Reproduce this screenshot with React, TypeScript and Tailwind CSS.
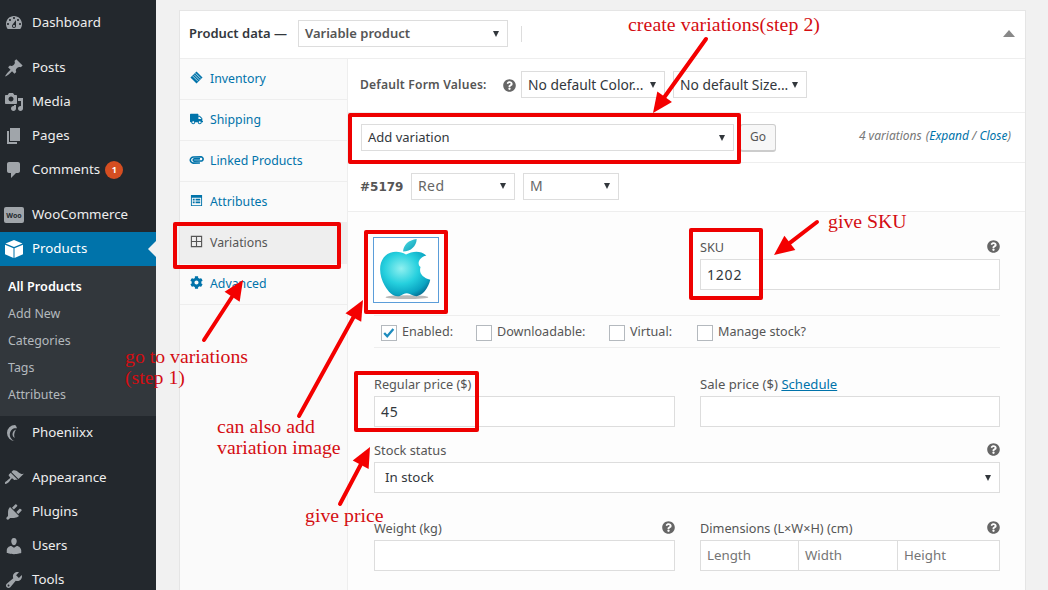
import React from "react";
import { FaTruck, FaPaperclip, FaCog, FaQuestionCircle } from "react-icons/fa";

const font = "font-['Noto_Sans',sans-serif]";
const P: Record<string, string> = {
  dash: "M3.76 16h12.48c1.1-1.37 1.76-3.11 1.76-5 0-4.42-3.58-8-8-8s-8 3.58-8 8c0 1.89.66 3.63 1.76 5zM10 4c.55 0 1 .45 1 1s-.45 1-1 1-1-.45-1-1 .45-1 1-1zM6 6c.55 0 1 .45 1 1s-.45 1-1 1-1-.45-1-1 .45-1 1-1zm8 0c.55 0 1 .45 1 1s-.45 1-1 1-1-.45-1-1 .45-1 1-1zm-5.37 5.55L12 7v6c0 1.1-.9 2-2 2s-2-.9-2-2c0-.57.24-1.08.63-1.45zM4 10c.55 0 1 .45 1 1s-.45 1-1 1-1-.45-1-1 .45-1 1-1zm12 0c.55 0 1 .45 1 1s-.45 1-1 1-1-.45-1-1 .45-1 1-1zm-5 3c0-.55-.45-1-1-1s-1 .45-1 1 .45 1 1 1 1-.45 1-1z",
  post: "M10.44 3.02l1.82-1.82 6.36 6.35-1.83 1.82c-1.05-.68-2.48-.57-3.41.36l-.75.75c-.92.93-1.04 2.35-.35 3.41l-1.83 1.82-2.41-2.41-2.8 2.79c-.42.42-3.38 2.71-3.8 2.29s1.86-3.39 2.28-3.81l2.79-2.79L4.1 9.36l1.83-1.82c1.05.69 2.48.57 3.4-.36l.75-.75c.93-.92 1.05-2.35.36-3.41z",
  media: "M13 11V4c0-.55-.45-1-1-1h-1.67L9 1H5L3.67 3H2c-.55 0-1 .45-1 1v7c0 .55.45 1 1 1h10c.55 0 1-.45 1-1zM7 4.5c1.38 0 2.5 1.12 2.5 2.5S8.38 9.5 7 9.5 4.5 8.38 4.5 7 5.62 4.5 7 4.5zM14 6h5v10.5c0 1.38-1.12 2.5-2.5 2.5S14 17.88 14 16.5s1.12-2.5 2.5-2.5c.17 0 .34.02.5.05V9h-3V6zm-4 8.05V13h2v3.5c0 1.38-1.12 2.5-2.5 2.5S7 17.88 7 16.5 8.12 14 9.5 14c.17 0 .34.02.5.05z",
  page: "M6 15V2h10v13H6zm-1 1h8v2H3V5h2v11z",
  comment: "M5 2h9c1.1 0 2 .9 2 2v7c0 1.1-.9 2-2 2h-2l-5 5v-5H5c-1.1 0-2-.9-2-2V4c0-1.1.9-2 2-2z",
  box: "M10 1l8.5 3.5L10 8 1.5 4.500zM1 5.700l8.500 3.500V19L1 15.300zM19 5.700V15.300L10.500 19V9.200z",
  phoenix: "M11 2a8 8 0 1 0 0 16c-1.500-.3-3-1.100-3.800-2.500C4.500 12 6 7 9.500 5.500c1-.4 2.200-.5 3.500-.2-.5-1.500-1-2.700-2-3.300zm1 4.500c-2.500.8-4 3.500-3.200 6.200.3 1 1 1.800 2 2.100-1-1.800-1-5 1.200-8.300z",
  appearance: "M14.48 11.06L7.41 3.99l1.5-1.5c.5-.56 2.3-.47 3.51.32 1.21.8 1.43 1.28 2.91 2.1 1.18.64 2.45 1.26 4.45.85zm-.71.71L6.7 4.7 4.93 6.47c-.39.39-.39 1.02 0 1.41l1.06 1.06c.39.39.39 1.03 0 1.42-.6.6-1.43 1.11-2.21 1.69-.35.26-.7.53-1.01.84C1.43 13.23.4 14.95 1.1 15.65c.7.7 2.42-.33 3.76-1.67.31-.31.58-.66.85-1.01.57-.78 1.08-1.61 1.69-2.21.39-.39 1.02-.39 1.41 0l1.06 1.06c.39.39 1.02.39 1.41 0z",
  plugin: "M13.11 4.36L9.87 7.6 8 5.73l3.24-3.24c.35-.34 1.05-.2 1.56.32.52.51.66 1.21.31 1.55zm-8 1.77l.91-1.12 9.01 9.01-1.19.84c-.71.71-2.63 1.16-3.82 1.16H6.14L4.9 17.26c-.59.59-1.54.59-2.12 0-.59-.58-.59-1.53 0-2.12l1.24-1.24v-3.88c0-1.13.4-3.19 1.09-3.89zm7.26 3.97l3.24-3.24c.34-.35 1.04-.21 1.55.31.52.51.66 1.21.31 1.55l-3.24 3.25z",
  users: "M10 9.25c-2.27 0-2.73-3.44-2.73-3.44C7 4.02 7.82 2 9.97 2c2.16 0 2.98 2.02 2.71 3.81 0 0-.41 3.44-2.68 3.44zm0 2.57L12.72 10c2.39 0 4.52 2.33 4.52 4.53v2.49s-3.65 1.13-7.24 1.13c-3.65 0-7.24-1.13-7.24-1.13v-2.49c0-2.25 1.94-4.48 4.47-4.48z",
  tools: "M16.68 9.77c-1.34 1.34-3.3 1.67-4.95.99l-5.41 6.52c-.99.99-2.59.99-3.58 0s-.99-2.59 0-3.57l6.52-5.42c-.68-1.65-.35-3.61.99-4.95 1.28-1.28 3.12-1.62 4.72-1.06l-2.89 2.89 2.82 2.82 2.86-2.87c.53 1.58.18 3.39-1.08 4.65zM3.81 16.21c.4.39 1.04.39 1.43 0 .4-.4.4-1.04 0-1.43-.39-.4-1.03-.4-1.43 0-.39.39-.39 1.03 0 1.43z",
};

function Dash({ d, className = "" }: { d: string; className?: string }) {
  return (
    <svg viewBox="0 0 20 20" className={`w-5 h-5 fill-current ${className}`}>
      <path d={d} />
    </svg>
  );
}

function Item({ icon, label, active, badge }: { icon?: string; label: string; active?: boolean; badge?: string }) {
  return (
    <div className={`relative flex items-center h-[34px] pl-[4px] ${active ? "bg-[#0073aa] text-white" : "text-[#eeeeee]"}`}>
      <div className={`w-[20px] flex justify-center mr-[8px] ${active ? "text-white" : "text-[#a0a5aa]"}`}>
        {icon === "woo" ? (
          <div className="w-5 h-[16px] rounded-[2px] bg-[#a0a5aa] text-[#23282d] text-[7px] font-bold flex items-center justify-center leading-none">Woo</div>
        ) : (
          <Dash d={P[icon!]} />
        )}
      </div>
      <span className="text-[13.3px] leading-none -mt-[1px]">{label}</span>
      {badge && (
        <span className="ml-[5px] w-[18px] h-[18px] rounded-full bg-[#d54e21] text-white text-[9px] font-bold flex items-center justify-center">{badge}</span>
      )}
      {active && <span className="absolute right-0 top-[9px] border-y-[8px] border-y-transparent border-r-[8px] border-r-[#f1f1f1]" />}
    </div>
  );
}

function Sub({ label, bold }: { label: string; bold?: boolean }) {
  return (
    <div className={`flex items-center pl-[8px] ${bold ? "h-[29px] text-white font-semibold text-[12.700px]" : "h-[27px] text-[#b4b9be] text-[12.400px]"}`}>{label}</div>
  );
}

function Sidebar() {
  return (
    <aside className="w-[156px] shrink-0 bg-[#23282d] pt-[6px] h-[590px] overflow-hidden">
      <Item icon="dash" label="Dashboard" />
      <div className="h-[11px]" />
      <Item icon="post" label="Posts" />
      <Item icon="media" label="Media" />
      <Item icon="page" label="Pages" />
      <Item icon="comment" label="Comments" badge="1" />
      <div className="h-[11px]" />
      <Item icon="woo" label="WooCommerce" />
      <Item icon="box" label="Products" active />
      <div className="bg-[#32373c] h-[150px] pt-[6px]">
        <Sub label="All Products" bold />
        <Sub label="Add New" />
        <Sub label="Categories" />
        <Sub label="Tags" />
        <Sub label="Attributes" />
      </div>
      <Item icon="phoenix" label="Phoeniixx" />
      <div className="h-[11px]" />
      <Item icon="appearance" label="Appearance" />
      <Item icon="plugin" label="Plugins" />
      <Item icon="users" label="Users" />
      <Item icon="tools" label="Tools" />
    </aside>
  );
}

function Select({ label, className = "", h = "h-[27px]", px = "pl-[6px]" }: { label: string; className?: string; h?: string; px?: string }) {
  return (
    <div className={`flex items-center justify-between bg-white border border-[#dddddd] ${h} ${px} pr-[8px] text-[14px] text-[#32373c] ${className}`}>
      <span className="whitespace-nowrap leading-none">{label}</span>
      <span className="border-x-[3.5px] border-x-transparent border-t-[6px] border-t-[#32373c]" />
    </div>
  );
}

function Help({ className = "" }: { className?: string }) {
  return <FaQuestionCircle className={`w-[13px] h-[13px] text-[#666666] ${className}`} />;
}

function Tab({ icon, label, active }: { icon: React.ReactNode; label: string; active?: boolean }) {
  return (
    <div className={`h-[41px] flex items-center pl-[10px] border-b border-[#eeeeee] text-[12.300px] ${active ? "bg-[#eeeeee] text-[#555555]" : "text-[#0073aa]"}`}>
      <span className="w-[13px] h-[14px] mr-[7px] flex items-center justify-center -mt-[3px]">{icon}</span>
      <span className="leading-none">{label}</span>
    </div>
  );
}

function Field({ label, value, right, className = "" }: { label: React.ReactNode; value?: string; right?: boolean; className?: string }) {
  return (
    <div className={className}>
      <div className="flex justify-between items-center h-[13px] text-[12.700px] text-[#555555] leading-none">
        <span>{label}</span>
        {right && <Help className="-mt-[2px]" />}
      </div>
      <div className="mt-[5px] h-[31px] border border-[#dddddd] bg-white flex items-center pl-[6px] text-[14px] text-[#32373c] tracking-[0.8px]">{value}</div>
    </div>
  );
}

function Check({ label, checked, className = "" }: { label: string; checked?: boolean; className?: string }) {
  return (
    <div className={`flex items-center text-[12.600px] text-[#555555] ${className}`}>
      <span className="w-[16px] h-[16px] border border-[#b4b9be] bg-white mr-[5px] flex items-center justify-center">
        {checked && (
          <svg viewBox="0 0 16 16" className="w-[14px] h-[14px]">
            <path d="M2.500 8l3.500 3.800L13 3.500" fill="none" stroke="#1e8cbe" strokeWidth="2.600" />
          </svg>
        )}
      </span>
      <span className="leading-none">{label}</span>
    </div>
  );
}

function AppleImg() {
  return (
    <svg viewBox="0 0 66 66" className="w-full h-full">
      <defs>
        <radialGradient id="ag" cx="0.42" cy="0.38" r="0.68">
          <stop offset="0" stopColor="#8ff0f0" />
          <stop offset="0.5" stopColor="#26d0de" />
          <stop offset="0.85" stopColor="#0aa4c2" />
          <stop offset="1" stopColor="#06779b" />
        </radialGradient>
        <linearGradient id="lg" x1="0" y1="0" x2="1" y2="1">
          <stop offset="0" stopColor="#4fe2e6" />
          <stop offset="1" stopColor="#0a97b5" />
        </linearGradient>
      </defs>
      <ellipse cx="34" cy="61" rx="22" ry="2" fill="#8a8a8a" opacity="0.6" />
      <path d="M33 17 C26 13 16 13 10 20 C4 28 6 40 11 49 C15 56 20 61 26 60 C29 59 31 57 34 57 C37 57 40 60 44 60 C50 59 56 52 58 43 C50 41 46 36 48 30 C44 27 46 20 54 18 C47 12 39 14 33 17Z" fill="url(#ag)" />
      <path d="M30 14 C30 7 36 2 44 1 C44 8 38 14 30 14Z" fill="url(#lg)" />
    </svg>
  );
}

function Arrow({ x1, y1, x2, y2, w = 4, hl = 20, hw = 9 }: { x1: number; y1: number; x2: number; y2: number; w?: number; hl?: number; hw?: number }) {
  const dx = x2 - x1, dy = y2 - y1, l = Math.hypot(dx, dy);
  const ux = dx / l, uy = dy / l;
  const bx = x2 - ux * hl, by = y2 - uy * hl;
  const pts = `${x2},${y2} ${bx - uy * hw},${by + ux * hw} ${bx + uy * hw},${by - ux * hw}`;
  return (
    <g>
      <line x1={x1} y1={y1} x2={bx} y2={by} stroke="#f40000" strokeWidth={w} strokeLinecap="round" />
      <polygon points={pts} fill="#f40000" />
    </g>
  );
}

function Box({ className }: { className: string }) {
  return <div className={`absolute border-[4px] border-[#ee0000] rounded-[2px] ${className}`} />;
}

function Note({ className, children }: { className: string; children: React.ReactNode }) {
  return <div className={`absolute font-['Liberation_Serif',serif] text-[#d40d12] text-[19.800px] leading-[21px] whitespace-nowrap ${className}`}>{children}</div>;
}

export default function App() {
  return (
    <div className={`relative w-[1048px] h-[590px] overflow-hidden flex bg-[#f1f1f1] ${font}`}>
      <Sidebar />
      <main className="flex-1 pl-[23px] pr-[22px] pt-[10px] min-w-0">
        <div className="bg-white border border-[#e5e5e5] h-[600px]">
          <div className="h-[48px] border-b border-[#eeeeee] flex items-center pl-[9px] pr-[10px] pb-[2px]">
            <span className="text-[13px] font-semibold text-[#32373c] whitespace-nowrap w-[109px]">Product data —</span>
            <Select label="Variable product" className="w-[210px] !text-[13px] font-semibold !text-[#555555]" />
            <span className="ml-[13px] w-px h-[16px] bg-[#dddddd]" />
            <span className="ml-auto border-x-[6px] border-x-transparent border-b-[7px] border-b-[#888888]" />
          </div>
          <div className="flex">
            <div className="w-[168px] shrink-0 bg-[#fafafa] border-r border-[#eeeeee] h-[540px]">
              <div className="h-[246px] border-b border-[#eeeeee]">
                <Tab
                  icon={
                    <svg viewBox="0 0 14 14" className="w-[13px] h-[13px]">
                      <path fill="currentColor" d="M7 0.500 13.500 7 7 13.500 0.500 7z" />
                      <path fill="none" stroke="#fafafa" strokeWidth="0.800" d="M4.500 4 10 9.500M3 5.500 8.500 11M6 2.500 11.500 8" />
                    </svg>
                  }
                  label="Inventory"
                />
                <Tab icon={<FaTruck className="w-[14px] h-[14px]" />} label="Shipping" />
                <Tab icon={<FaPaperclip className="w-[13px] h-[13px] rotate-[45deg]" />} label="Linked Products" />
                <Tab
                  icon={
                    <svg viewBox="0 0 14 14" className="w-[13px] h-[13px]">
                      <path fillRule="evenodd" fill="currentColor" d="M1 1h12v12H1zM2 4v8h10V4zM3 5h2v2H3zM6 5h5v2H6zM3 8h2v2H3zM6 8h5v2H6z" />
                    </svg>
                  }
                  label="Attributes"
                />
                <Tab
                  active
                  icon={
                    <svg viewBox="0 0 14 14" className="w-[13px] h-[13px]">
                      <path fill="none" stroke="currentColor" strokeWidth="1.200" d="M1.500 1.500h11v11h-11zM7 1.500v11M1.500 7h11" />
                    </svg>
                  }
                  label="Variations"
                />
                <Tab icon={<FaCog className="w-[13px] h-[13px]" />} label="Advanced" />
              </div>
            </div>
            <div className="flex-1 min-w-0">
              <div className="h-[54px] border-b border-[#eeeeee] flex items-center pl-[12px] pb-[2px]">
                <span className="text-[12.100px] font-semibold text-[#555555] tracking-[0.2px] whitespace-nowrap w-[143px] mt-[2px]">Default Form Values:</span>
                <Help className="mr-[5px] mt-[2px]" />
                <Select label="No default Color..." className="w-[144px] !text-[13.800px]" />
                <Select label="No default Size..." className="w-[134px] ml-[8px] !text-[13.800px]" />
              </div>
              <div className="h-[50px] border-b border-[#eeeeee] flex items-center pl-[13px] pr-[14px]">
                <Select label="Add variation" className="w-[373px] !text-[13px]" />
                <div className="ml-[6px] w-[36px] h-[28px] flex items-center justify-center bg-[#f7f7f7] border border-[#cccccc] border-b-[2px] rounded-[3px] text-[12px] text-[#555555]">Go</div>
                <span className="ml-auto text-[12px] italic text-[#777777] whitespace-nowrap -mt-[3px]">
                  4 variations <span className="ml-[1px]">(<span className="text-[#0073aa]">Expand</span> / <span className="text-[#0073aa]">Close</span>)</span>
                </span>
              </div>
              <div className="h-[49px] border-b border-[#eeeeee] flex items-center pl-[12px] pb-[2px]">
                <span className="w-[51px] font-['DejaVu_Sans',sans-serif] text-[12px] font-bold text-[#555555] whitespace-nowrap mt-[2px]">#5179</span>
                <Select label="Red" className="w-[104px] !text-[#666666] tracking-[0.4px]" />
                <Select label="M" className="w-[96px] ml-[8px] !text-[#666666]" />
              </div>
              <div className="bg-[#fdfdfd] h-[380px] pl-[26px] pr-[25px]">
                <div className="h-[103px] flex">
                  <div className="w-[326px] pt-[25px]">
                    <div className="w-[66px] h-[66px] -ml-[1px] border border-[#5b9dd9] bg-white">
                      <AppleImg />
                    </div>
                  </div>
                  <Field className="flex-1 pt-[29px]" label="SKU" value="1202" right />
                </div>
                <div className="h-[33px] border-y border-[#eeeeee] flex items-center pl-[7px] pt-[2px]">
                  <Check label="Enabled:" checked className="w-[95px]" />
                  <Check label="Downloadable:" className="w-[133px]" />
                  <Check label="Virtual:" className="w-[88px]" />
                  <Check label="Manage stock?" />
                </div>
                <div className="flex gap-[25px] mt-[30px]">
                  <Field className="w-[301px]" label="Regular price ($)" value="45" />
                  <Field className="flex-1" label={<span className="text-[13.100px]">Sale price ($) <span className="text-[#0073aa] underline">Schedule</span></span>} />
                </div>
                <div className="mt-[17px]">
                  <div className="flex justify-between items-center h-[13px] text-[12.800px] text-[#555555] leading-none">
                    <span>Stock status</span>
                    <Help className="-mt-[2px]" />
                  </div>
                  <Select label="In stock" h="h-[31px]" px="pl-[10px]" className="mt-[5px] !text-[13.300px]" />
                </div>
                <div className="flex gap-[25px] mt-[29px]">
                  <Field className="w-[301px]" label="Weight (kg)" right />
                  <div className="flex-1">
                    <div className="flex justify-between items-center h-[13px] text-[12.700px] text-[#555555] leading-none">
                      <span>Dimensions (L×W×H) (cm)</span>
                      <Help className="-mt-[2px]" />
                    </div>
                    <div className="mt-[5px] h-[31px] flex text-[13.300px] text-[#757575]">
                      <div className="w-[99px] border border-[#dddddd] bg-white flex items-center pl-[6px]">Length</div>
                      <div className="w-[99px] border-y border-r border-[#dddddd] bg-white flex items-center pl-[6px]">Width</div>
                      <div className="flex-1 border-y border-r border-[#dddddd] bg-white flex items-center pl-[6px]">Height</div>
                    </div>
                  </div>
                </div>
              </div>
            </div>
          </div>
        </div>
      </main>

      <Box className="left-[348px] top-[113px] w-[393px] h-[51px]" />
      <Box className="left-[173px] top-[222px] w-[168px] h-[47px]" />
      <Box className="left-[364px] top-[230px] w-[84px] h-[84px]" />
      <Box className="left-[689px] top-[228px] w-[74px] h-[72px]" />
      <Box className="left-[354px] top-[371px] w-[125px] h-[61px]" />

      <svg className="absolute inset-0 pointer-events-none" width="1048" height="590" viewBox="0 0 1048 590">
        <Arrow x1={706} y1={39} x2={653} y2={113} />
        <Arrow x1={204} y1={340} x2={243} y2={280} />
        <Arrow x1={299} y1={416} x2={363} y2={300} />
        <Arrow x1={340} y1={504} x2={370} y2={447} />
        <Arrow x1={817} y1={222} x2={774} y2={255} />
      </svg>

      <Note className="left-[628px] top-[14px] tracking-[0.08px]">create variations(step 2)</Note>
      <Note className="left-[828px] top-[211px]">give SKU</Note>
      <Note className="left-[125px] top-[346px]">go to variations<br />(step 1)</Note>
      <Note className="left-[217px] top-[416px]">can also add<br />variation image</Note>
      <Note className="left-[305px] top-[505px]">give price</Note>
    </div>
  );
}
